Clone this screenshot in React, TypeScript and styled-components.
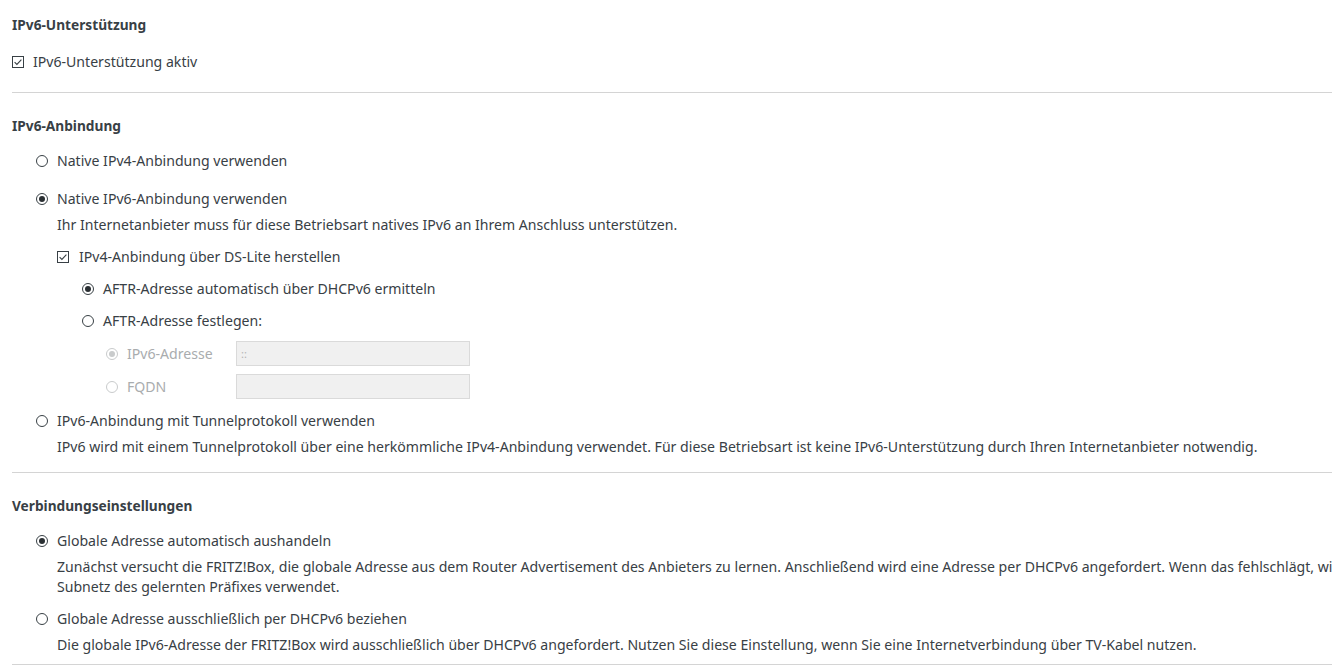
import React from "react";
import styled, { createGlobalStyle } from "styled-components";

const Global = createGlobalStyle`
  html, body { margin: 0; padding: 0; background: #ffffff; overflow: hidden; }
  body {
    font-family: "Noto Sans", "Open Sans", sans-serif;
    font-size: 14.1px;
    line-height: 20px;
    color: #384045;
  }
`;

const Page = styled.main`
  width: 1320px;
  margin-left: 12px;
`;

const Section = styled.section<{ $top: number; $bottom: number }>`
  padding: ${(p) => p.$top}px 0 ${(p) => p.$bottom}px;
  border-bottom: 1px solid #d4d4d4;
`;

const Heading = styled.h2<{ $gap: number }>`
  margin: 0 0 ${(p) => p.$gap}px;
  font-size: 13.7px;
  line-height: 20px;
  font-weight: 700;
  color: #384045;
`;

const List = styled.div<{ $indent?: number; $gap: number; $top?: number }>`
  display: flex;
  flex-direction: column;
  gap: ${(p) => p.$gap}px;
  margin-left: ${(p) => p.$indent ?? 0}px;
  margin-top: ${(p) => p.$top ?? 0}px;
`;

const Option = styled.div<{ $pad?: number }>`
  display: flex;
  flex-direction: column;
  padding-bottom: ${(p) => p.$pad ?? 0}px;
`;

const Label = styled.label<{ $disabled?: boolean; $gap?: number }>`
  display: flex;
  align-items: center;
  gap: ${(p) => p.$gap ?? 9}px;
  height: 20px;
  white-space: nowrap;
  color: ${(p) => (p.$disabled ? "#a9acae" : "inherit")};
`;

const Desc = styled.p<{ $indent: number }>`
  margin: 6px 0 0 ${(p) => p.$indent}px;
  white-space: nowrap;
`;

const RadioCircle = styled.span<{ $disabled?: boolean }>`
  flex: none;
  box-sizing: border-box;
  width: 12px;
  height: 12px;
  border-radius: 50%;
  border: 1px solid ${(p) => (p.$disabled ? "#c9cbcc" : "#384045")};
  background: #ffffff;
  display: grid;
  place-items: center;
`;

const RadioDot = styled.span<{ $disabled?: boolean }>`
  width: 6px;
  height: 6px;
  border-radius: 50%;
  background: ${(p) => (p.$disabled ? "#c9cbcc" : "#2a2f33")};
`;

const CheckSvg = styled.svg`
  flex: none;
  display: block;
`;

const FieldRow = styled.div`
  display: grid;
  grid-template-columns: 130px 234px;
  align-items: center;
  height: 25px;
`;

const Field = styled.input`
  box-sizing: border-box;
  width: 234px;
  height: 25px;
  margin: 0;
  padding: 0 4px;
  border: 1px solid #dadada;
  background: #f0f0f0;
  font-family: "Noto Sans", sans-serif;
  font-size: 11px;
  color: #b3b3b3;
  outline: none;
`;

function Radio({ checked, disabled }: { checked?: boolean; disabled?: boolean }) {
  return <RadioCircle $disabled={disabled}>{checked && <RadioDot $disabled={disabled} />}</RadioCircle>;
}

function Check() {
  return (
    <CheckSvg width="12" height="12" viewBox="0 0 12 12">
      <rect x="0.5" y="0.5" width="11" height="11" fill="#fff" stroke="#384045" strokeWidth="1" />
      <path d="M2.6 6.1 L4.9 8.4 L9.4 3.6" fill="none" stroke="#384045" strokeWidth="1.1" />
    </CheckSvg>
  );
}

export default function App() {
  return (
    <>
      <Global />
      <Page>
        <Section $top={15} $bottom={20}>
          <Heading $gap={17}>IPv6-Unterstützung</Heading>
          <Label>
            <Check />
            IPv6-Unterstützung aktiv
          </Label>
        </Section>

        <Section $top={23} $bottom={15}>
          <Heading $gap={15}>IPv6-Anbindung</Heading>
          <List $indent={24} $gap={12}>
            <Option $pad={6}>
              <Label>
                <Radio />
                Native IPv4-Anbindung verwenden
              </Label>
            </Option>
            <Option>
              <Label>
                <Radio checked />
                Native IPv6-Anbindung verwenden
              </Label>
              <Desc $indent={21}>
                Ihr Internetanbieter muss für diese Betriebsart natives IPv6 an Ihrem Anschluss unterstützen.
              </Desc>
              <List $indent={21} $top={12} $gap={12}>
                <Option>
                  <Label $gap={10}>
                    <Check />
                    IPv4-Anbindung über DS-Lite herstellen
                  </Label>
                  <List $indent={25} $top={12} $gap={12}>
                    <Label>
                      <Radio checked />
                      AFTR-Adresse automatisch über DHCPv6 ermitteln
                    </Label>
                    <Option>
                      <Label>
                        <Radio />
                        AFTR-Adresse festlegen:
                      </Label>
                      <List $indent={24} $top={10} $gap={8}>
                        <FieldRow>
                          <Label $disabled>
                            <Radio checked disabled />
                            IPv6-Adresse
                          </Label>
                          <Field disabled defaultValue="::" />
                        </FieldRow>
                        <FieldRow>
                          <Label $disabled>
                            <Radio disabled />
                            FQDN
                          </Label>
                          <Field disabled defaultValue="" />
                        </FieldRow>
                      </List>
                    </Option>
                  </List>
                </Option>
              </List>
            </Option>
            <Option>
              <Label>
                <Radio />
                IPv6-Anbindung mit Tunnelprotokoll verwenden
              </Label>
              <Desc $indent={21}>
                IPv6 wird mit einem Tunnelprotokoll über eine herkömmliche IPv4-Anbindung verwendet. Für diese
                Betriebsart ist keine IPv6-Unterstützung durch Ihren Internetanbieter notwendig.
              </Desc>
            </Option>
          </List>
        </Section>

        <Section $top={23} $bottom={9}>
          <Heading $gap={15}>Verbindungseinstellungen</Heading>
          <List $indent={24} $gap={12}>
            <Option>
              <Label>
                <Radio checked />
                Globale Adresse automatisch aushandeln
              </Label>
              <Desc $indent={21}>
                Zunächst versucht die FRITZ!Box, die globale Adresse aus dem Router Advertisement des Anbieters zu
                lernen. Anschließend wird eine Adresse per DHCPv6 angefordert. Wenn das fehlschlägt, wird eine Adresse
                aus dem
                <br />
                Subnetz des gelernten Präfixes verwendet.
              </Desc>
            </Option>
            <Option>
              <Label>
                <Radio />
                Globale Adresse ausschließlich per DHCPv6 beziehen
              </Label>
              <Desc $indent={21}>
                Die globale IPv6-Adresse der FRITZ!Box wird ausschließlich über DHCPv6 angefordert. Nutzen Sie diese
                Einstellung, wenn Sie eine Internetverbindung über TV-Kabel nutzen.
              </Desc>
            </Option>
          </List>
        </Section>
      </Page>
    </>
  );
}
